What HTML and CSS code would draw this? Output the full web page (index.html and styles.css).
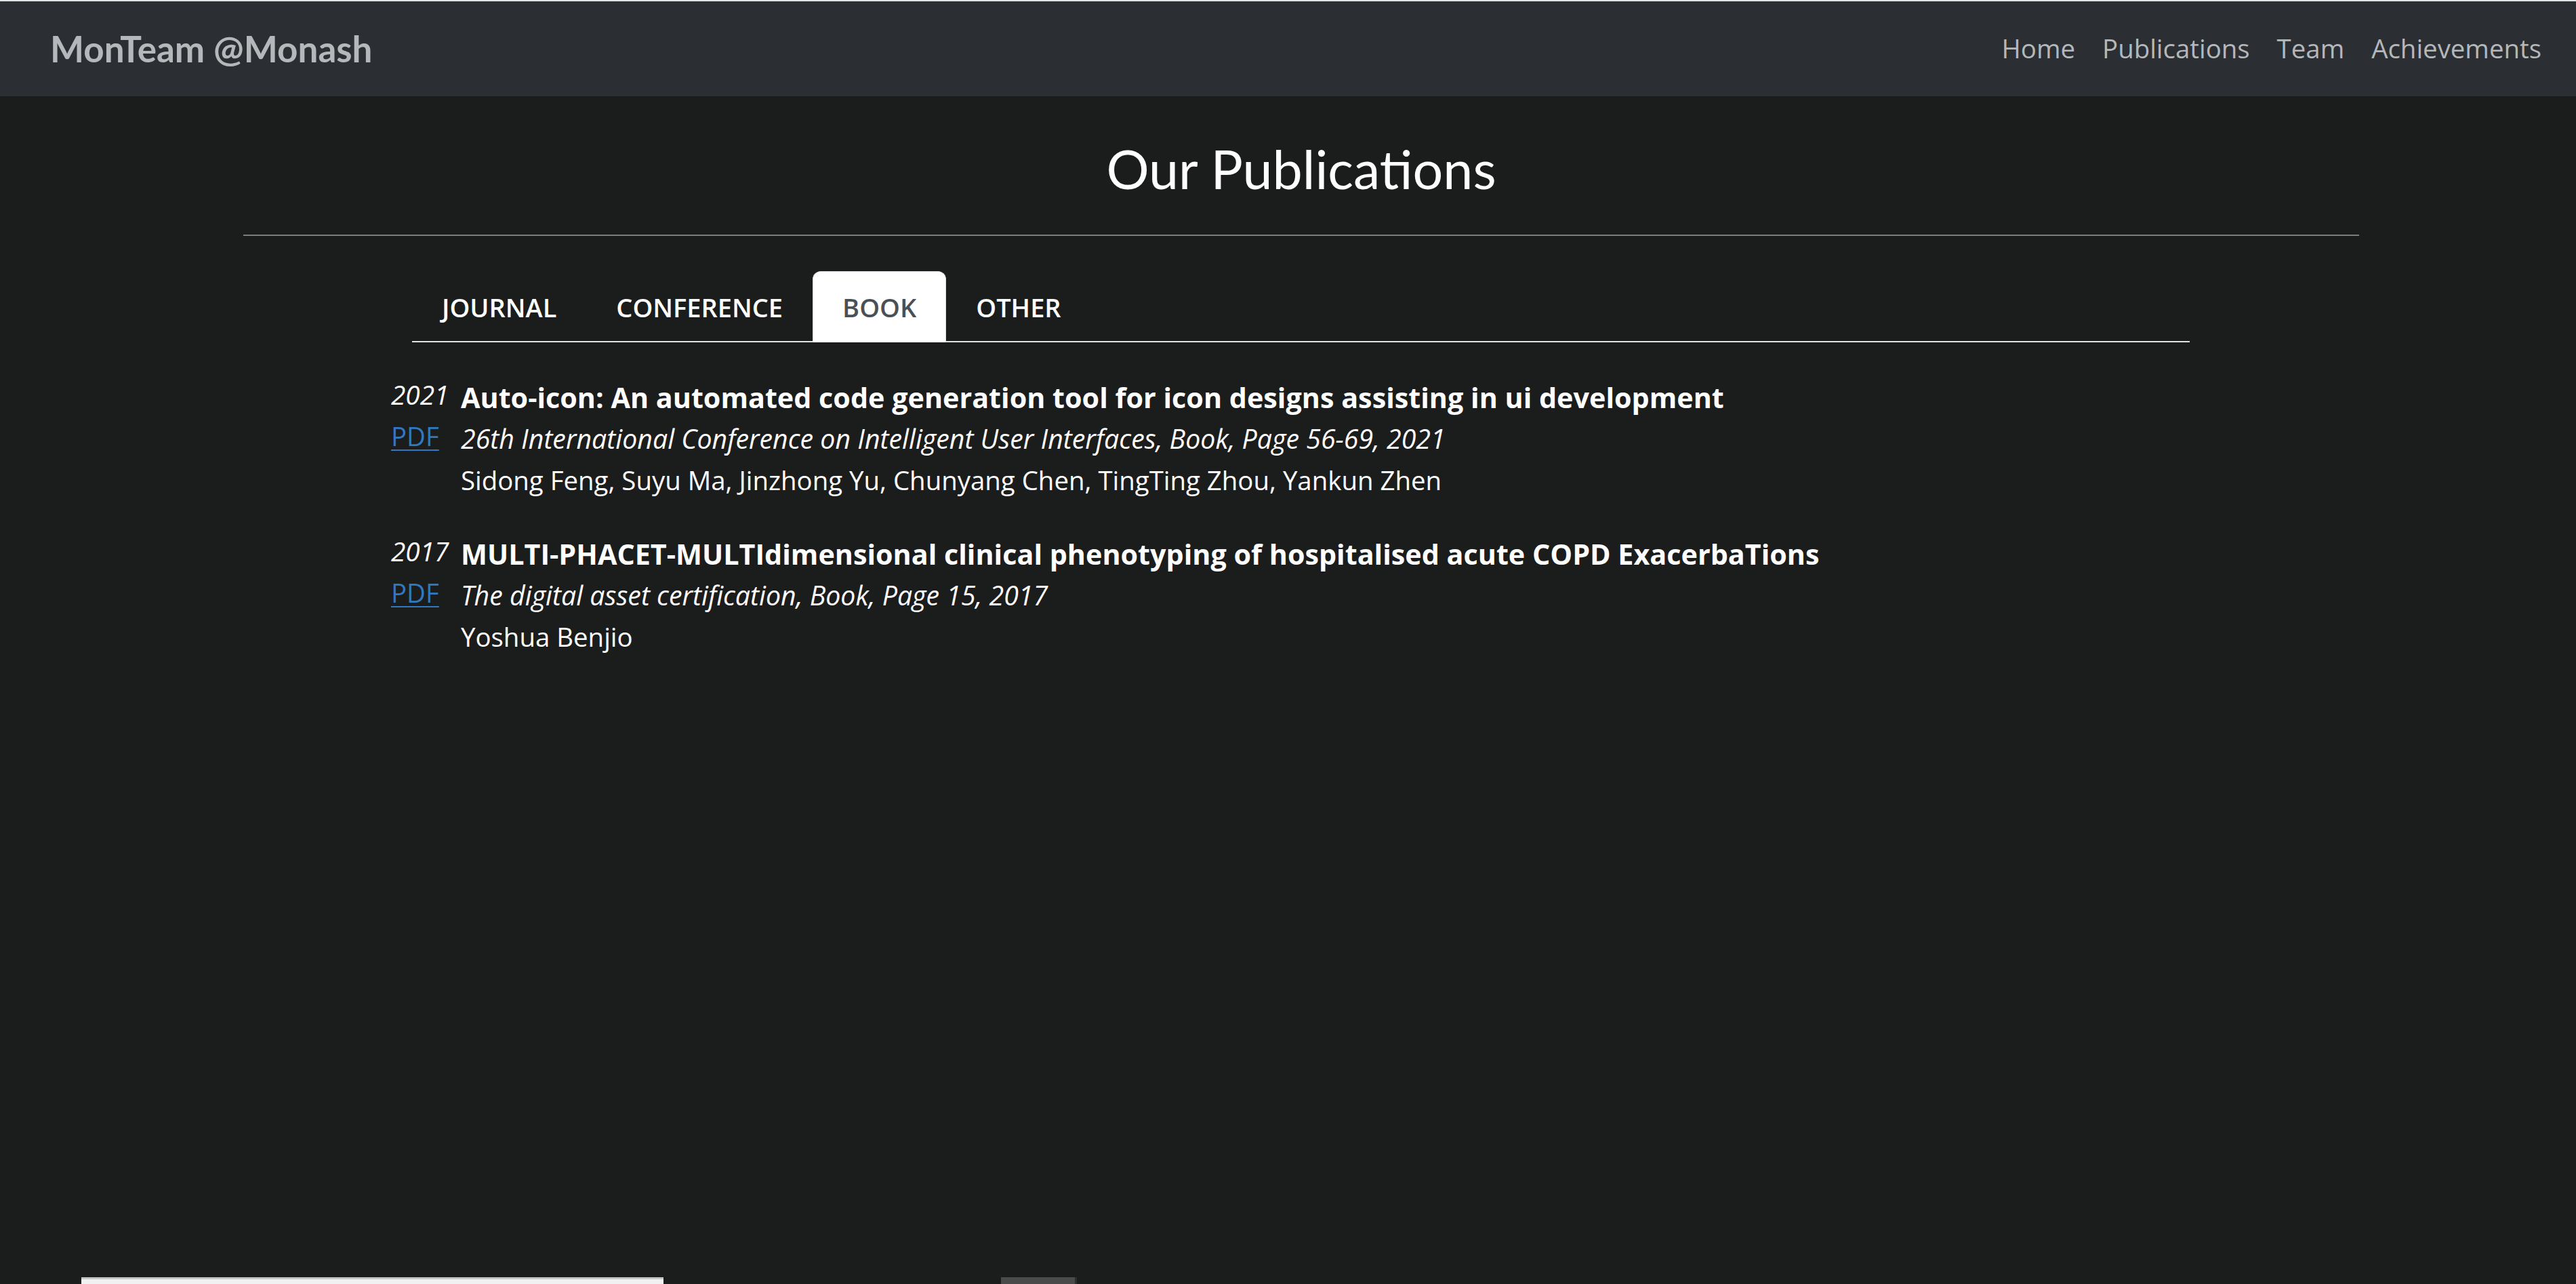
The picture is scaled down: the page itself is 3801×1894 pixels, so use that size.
FILE: index.html
```html
<!DOCTYPE html>
<html lang="en">
<head>
<meta charset="utf-8">
<title>MonTeam @Monash - Publications</title>
<link rel="stylesheet" href="styles.css">
</head>
<body>
<nav class="navbar">
  <a class="brand" href="#">MonTeam @Monash</a>
  <ul class="nav-links">
    <li><a href="#">Home</a></li>
    <li><a href="#">Publications</a></li>
    <li><a href="#">Team</a></li>
    <li><a href="#">Achievements</a></li>
  </ul>
</nav>
<main class="page">
  <h1 class="page-title">Our Publications</h1>
  <hr class="divider">
  <section class="pub-section">
    <ul class="tabs">
      <li><a class="tab" href="#">JOURNAL</a></li>
      <li><a class="tab" href="#">CONFERENCE</a></li>
      <li><a class="tab active" href="#">BOOK</a></li>
      <li><a class="tab" href="#">OTHER</a></li>
    </ul>
    <div class="pub-list">
      <article class="pub">
        <div class="pub-side">
          <span class="year">2021</span>
          <a class="pdf" href="#">PDF</a>
        </div>
        <div class="pub-body">
          <div class="pub-title">Auto-icon: An automated code generation tool for icon designs assisting in ui development</div>
          <div class="venue">26th International Conference on Intelligent User Interfaces, Book, Page 56-69, 2021</div>
          <div class="authors">Sidong Feng, Suyu Ma, Jinzhong Yu, Chunyang Chen, TingTing Zhou, Yankun Zhen</div>
        </div>
      </article>
      <article class="pub">
        <div class="pub-side">
          <span class="year">2017</span>
          <a class="pdf" href="#">PDF</a>
        </div>
        <div class="pub-body">
          <div class="pub-title">MULTI-PHACET-MULTIdimensional clinical phenotyping of hospitalised acute COPD ExacerbaTions</div>
          <div class="venue">The digital asset certification, Book, Page 15, 2017</div>
          <div class="authors">Yoshua Benjio</div>
        </div>
      </article>
    </div>
  </section>
</main>
<div class="bottom-strip">
  <span class="strip-bar"></span>
  <span class="strip-block"></span>
</div>
</body>
</html>
```
FILE: styles.css
```css
html, body {
  margin: 0;
  padding: 0;
}
body {
  background: #1b1c1c;
  color: #ffffff;
  font-family: "Open Sans", "Noto Sans", sans-serif;
  font-size: 38.8px;
  min-height: 1894px;
}
a { text-decoration: none; }
ul { list-style: none; margin: 0; padding: 0; }

.navbar {
  display: flex;
  align-items: center;
  justify-content: space-between;
  height: 140px;
  border-top: 2px solid #e2e2e2;
  background: #2b2f33;
  padding: 0 31px 0 74px;
}
.brand {
  color: #b4b8bb;
  font-family: "Lato", "Open Sans", sans-serif;
  font-weight: 700;
  font-size: 53px;
  line-height: 1.2;
}
.nav-links {
  display: flex;
}
.nav-links a {
  display: block;
  padding: 0 20px;
  color: #b4b8bb;
  font-size: 38.4px;
  line-height: 1.5;
}

.page {
  padding: 0 320px 0 359px;
}
.page-title {
  margin: 59px 0 0;
  text-align: center;
  font-family: "Lato", "Open Sans", sans-serif;
  font-weight: 400;
  font-size: 79px;
  line-height: 96px;
}
.divider {
  margin: 49px 0 0;
  border: 0;
  border-top: 2px solid #7d7d7d;
  height: 0;
}
.pub-section {
  margin: 52px 250px 0 218px;
}
.tabs {
  display: flex;
  margin-left: 31px;
  border-bottom: 2px solid #dee2e6;
}
.tab {
  display: block;
  margin-bottom: -2px;
  padding: 23px 43px 21px;
  border: 1px solid transparent;
  border-bottom: 0;
  border-radius: 12px 12px 0 0;
  color: #ffffff;
  font-weight: 600;
  font-size: 38px;
  line-height: 58px;
}
.tab.active {
  background: #ffffff;
  border-color: #dee2e6;
  color: #495057;
  padding-bottom: 23px;
}

.pub-list {
  margin-top: 51px;
  display: flex;
  flex-direction: column;
  gap: 48px;
}
.pub {
  display: flex;
}
.pub-side {
  display: flex;
  flex-direction: column;
  align-items: flex-start;
  width: 103px;
  flex: none;
  margin-top: -4px;
}
.year {
  font-style: italic;
  font-size: 38.8px;
  line-height: 61px;
}
.pdf {
  color: #3079c0;
  text-decoration: underline;
  text-decoration-thickness: 2px;
  text-underline-offset: 5px;
  font-size: 38.4px;
  line-height: 61px;
}
.pub-body {
  display: flex;
  flex-direction: column;
}
.pub-title {
  font-weight: 700;
  font-size: 41.3px;
  line-height: 61px;
}
.venue {
  font-style: italic;
  font-size: 39.3px;
  line-height: 61px;
}
.authors {
  font-size: 38.4px;
  line-height: 61px;
}

.bottom-strip {
  position: fixed;
  left: 0;
  right: 0;
  bottom: 0;
  height: 10px;
  display: flex;
  align-items: stretch;
}
.strip-bar {
  margin-left: 120px;
  width: 859px;
  background: #f1f1f1;
  border-top: 3px solid #c6c6c6;
}
.strip-block {
  margin-left: 498px;
  width: 109px;
  background: #4a4a4a;
  border-right: 3px solid #2e2e2e;
}
```
